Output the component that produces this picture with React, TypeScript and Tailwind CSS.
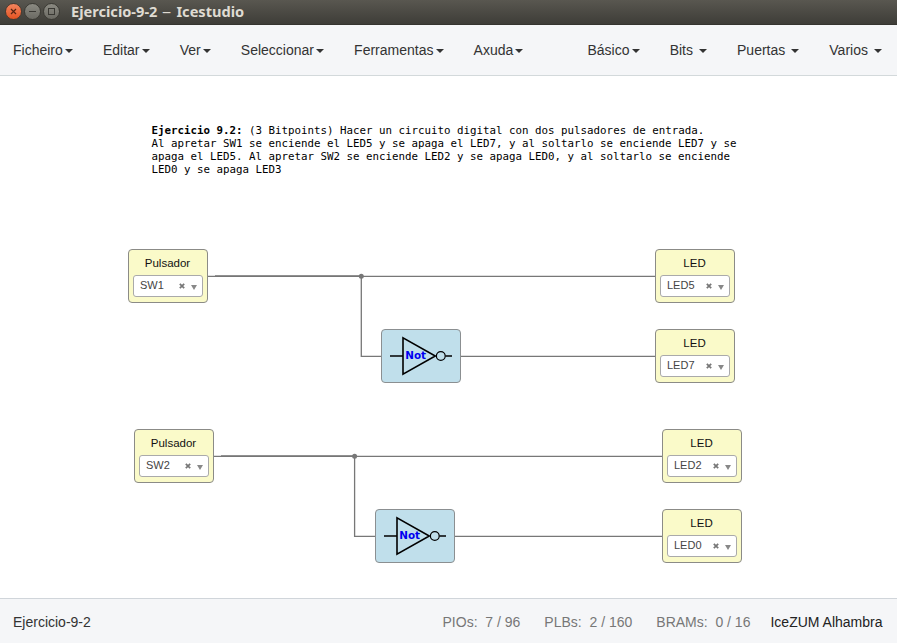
const leftMenu = ['Ficheiro', 'Editar', 'Ver', 'Seleccionar', 'Ferramentas', 'Axuda'];
const rightMenu = ['Básico', 'Bits ', 'Puertas ', 'Varios '];

function MenuItem({ label }: { label: string }) {
  return (
    <li className="flex items-center whitespace-pre px-[15px]">
      {label}
      <span className="ml-[2.15px] mt-px border-x-4 border-t-4 border-x-transparent border-t-[#333]" />
    </li>
  );
}

function WindowButton({ kind }: { kind: 'close' | 'min' | 'max' }) {
  const close = kind === 'close';
  return (
    <svg
      className={
        close
          ? 'size-[17px] rounded-full border border-[#4a3a30] bg-linear-to-b from-[#f4845c] to-[#e4531f]'
          : 'size-[17px] rounded-full border border-[#3b3a34] bg-linear-to-b from-[#8b8a82] to-[#6b6a63]'
      }
      viewBox="0 0 15 15"
      fill="none"
      stroke={close ? '#572412' : '#3a3934'}
    >
      {close && <path d="M5 5l5 5M10 5l-5 5" strokeWidth="1.2" />}
      {kind === 'min' && <path d="M4 7.5h7" />}
      {kind === 'max' && <rect x="4.5" y="4.5" width="6" height="6" />}
    </svg>
  );
}

interface IOProps {
  title: string;
  pin: string;
  place: string;
}

function IOBlock({ title, pin, place }: IOProps) {
  return (
    <div
      className={`absolute h-[54px] w-20 rounded-[4px] border border-[#8b8b87] bg-[#fafac9] px-1 pt-[6px] ${place}`}
    >
      <div className="-ml-px text-center text-[11.5px] leading-[14px] text-[#111]">{title}</div>
      <div className="mt-[5px] flex h-[22px] items-center rounded-[3px] border border-[#aaa] bg-white pl-[6px] pr-[5px] text-[11px] leading-none text-[#444]">
        <span className="-mt-px flex-1">{pin}</span>
        <svg className="-mt-px mr-[6px] size-[6px]" viewBox="0 0 6 6" stroke="#777" strokeWidth="1.7">
          <path d="M.8.8l4.4 4.4M5.2.8L.8 5.2" />
        </svg>
        <span className="mt-[2px] border-x-[3px] border-t-[5px] border-x-transparent border-t-[#888]" />
      </div>
    </div>
  );
}

function NotBlock({ place }: { place: string }) {
  return (
    <div className={`absolute h-[54px] w-20 rounded-[4px] border border-[#8b8f91] bg-[#c0dfeb] ${place}`}>
      <svg className="h-[52px] w-[78px]" viewBox="0 0 78 52" fill="none" stroke="#000">
        <path d="M8 26H21M63.4 26H70" strokeWidth="1.3" />
        <path d="M21 7.8V44.2L53.3 26Z" strokeWidth="1.6" />
        <circle cx="58.8" cy="26" r="4.4" strokeWidth="1.2" />
        <text
          x="23.2"
          y="29"
          className="fill-[#0000f0] stroke-none font-['DejaVu_Sans'] text-[10.4px] font-bold"
        >
          Not
        </text>
      </svg>
    </div>
  );
}

export default function App() {
  return (
    <div className="flex h-[643px] w-[897px] flex-col overflow-hidden bg-white font-['Liberation_Sans',Arial,sans-serif] text-sm text-[#333]">
      <header className="flex h-[25px] shrink-0 items-center gap-[2px] border-b border-[#35342f] bg-linear-to-b from-[#595750] to-[#3e3d38] pb-px pl-[5px]">
        <WindowButton kind="close" />
        <WindowButton kind="min" />
        <WindowButton kind="max" />
        <h1 className="-mt-px ml-[9px] flex items-center whitespace-nowrap font-['Noto_Sans',sans-serif] text-[14.6px] font-bold leading-none text-[#dfdbd2]">
          Ejercicio-9-2
          <span className="mx-[5px] w-[9px] scale-x-125 text-center font-normal">–</span>
          Icestudio
        </h1>
      </header>

      <nav className="flex h-[51px] shrink-0 justify-between border-b border-[#d3d9db] bg-[#f5f6f8]">
        <ul className="-ml-[2px] flex">
          {leftMenu.map((label) => (
            <MenuItem key={label} label={label} />
          ))}
        </ul>
        <ul className="flex">
          {rightMenu.map((label) => (
            <MenuItem key={label} label={label} />
          ))}
        </ul>
      </nav>

      <main className="relative min-h-0 flex-1">
        <p className="absolute left-[151.6px] top-12 whitespace-pre font-['DejaVu_Sans_Mono',monospace] text-[10.8px] leading-[13px] text-black">
          <b>Ejercicio 9.2:</b>
          {' (3 Bitpoints) Hacer un circuito digital con dos pulsadores de entrada.\n'}
          {'Al apretar SW1 se enciende el LED5 y se apaga el LED7, y al soltarlo se enciende LED7 y se\n'}
          {'apaga el LED5. Al apretar SW2 se enciende LED2 y se apaga LED0, y al soltarlo se enciende\n'}
          {'LED0 y se apaga LED3'}
        </p>

        <svg className="absolute left-0 top-0 h-[522px] w-[897px]" viewBox="0 76 897 522" fill="none" stroke="#777" strokeWidth="1.3">
          <path d="M208 276.3H655M361.3 276V356.3H381M461 356.3H655" />
          <path d="M214 456.3H662M354.6 456V536.3H375M455 536.3H662" />
          <path d="M215 275.9H361M221 456H354" />
          <g fill="#777" stroke="none">
            <circle cx="361.3" cy="276.2" r="2.5" />
            <circle cx="354.6" cy="456.2" r="2.5" />
          </g>
        </svg>

        <IOBlock title="Pulsador" pin="SW1" place="left-[128px] top-[173px]" />
        <IOBlock title="LED" pin="LED5" place="left-[655px] top-[173px]" />
        <IOBlock title="LED" pin="LED7" place="left-[655px] top-[253px]" />
        <IOBlock title="Pulsador" pin="SW2" place="left-[134px] top-[353px]" />
        <IOBlock title="LED" pin="LED2" place="left-[662px] top-[353px]" />
        <IOBlock title="LED" pin="LED0" place="left-[662px] top-[433px]" />
        <NotBlock place="left-[381px] top-[253px]" />
        <NotBlock place="left-[375px] top-[433px]" />
      </main>

      <footer className="flex h-[45px] shrink-0 items-center whitespace-pre border-t border-[#d0d5da] bg-[#f5f6f8] pl-[13px] pr-[14.5px] pt-[2px]">
        <span className="flex-1">Ejercicio-9-2</span>
        <div className="mr-5 flex gap-6 text-[#777]">
          <span>{'PIOs:  7 / 96'}</span>
          <span>{'PLBs:  2 / 160'}</span>
          <span>{'BRAMs:  0 / 16'}</span>
        </div>
        <span className="text-[#222]">IceZUM Alhambra</span>
      </footer>
    </div>
  );
}
